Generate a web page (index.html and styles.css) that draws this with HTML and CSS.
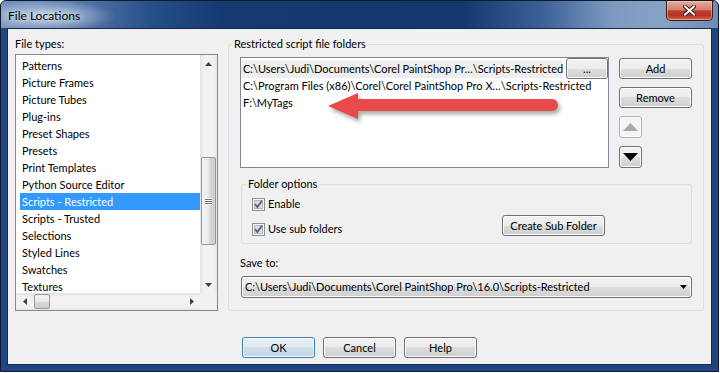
FILE: index.html
```html
<!DOCTYPE html>
<html lang="en">

<head>
    <meta charset="UTF-8">
    <meta name="viewport" content="width=device-width, initial-scale=1.0">
    <title>File Locations</title>
    <link rel="stylesheet" href="styles.css">
</head>

<body>
    <div class="window">
        <div class="titlebar">
            <span class="title">File Locations</span>
            <button class="close">
                <svg width="13" height="11" viewBox="0 0 13 11">
                    <path d="M2 1.5 L11 9.5 M11 1.5 L2 9.5" stroke="#3a1a16" stroke-width="4" stroke-linecap="square" />
                    <path d="M2 1.5 L11 9.5 M11 1.5 L2 9.5" stroke="#fff" stroke-width="2" stroke-linecap="square" />
                </svg>
            </button>
        </div>
        <div class="frame">
            <div class="client">
                <div class="main">
                    <div class="types">
                        <div class="caption">File types:</div>
                        <div class="listbox">
                            <ul class="items">
                                <li>Patterns</li>
                                <li>Picture Frames</li>
                                <li>Picture Tubes</li>
                                <li>Plug-ins</li>
                                <li>Preset Shapes</li>
                                <li>Presets</li>
                                <li>Print Templates</li>
                                <li>Python Source Editor</li>
                                <li class="selected">Scripts - Restricted</li>
                                <li>Scripts - Trusted</li>
                                <li>Selections</li>
                                <li>Styled Lines</li>
                                <li>Swatches</li>
                                <li>Textures</li>
                            </ul>
                            <div class="vscroll">
                                <span class="sb-btn"><svg width="7" height="4"><polygon points="0,4 3.5,0 7,4" fill="#404040" /></svg></span>
                                <span class="track"><span class="thumb"><i class="grip"></i></span></span>
                                <span class="sb-btn"><svg width="7" height="4"><polygon points="0,0 7,0 3.5,4" fill="#404040" /></svg></span>
                            </div>
                            <div class="hscroll">
                                <span class="sb-btn"><svg width="4" height="7"><polygon points="4,0 4,7 0,3.5" fill="#404040" /></svg></span>
                                <span class="track"><span class="thumb"></span></span>
                                <span class="sb-btn"><svg width="4" height="7"><polygon points="0,0 0,7 4,3.5" fill="#404040" /></svg></span>
                            </div>
                            <div class="corner"></div>
                        </div>
                    </div>

                    <fieldset class="group restricted">
                        <legend>Restricted script file folders</legend>
                        <div class="folders-row">
                            <div class="folders">
                                <div class="folder editing">
                                    <span class="path">C:\Users\Judi\Documents\Corel PaintShop Pr…\Scripts-Restricted</span>
                                    <button class="btn browse">...</button>
                                </div>
                                <div class="folder">C:\Program Files (x86)\Corel\Corel PaintShop Pro X…\Scripts-Restricted</div>
                                <div class="folder">F:\MyTags</div>
                            </div>
                            <div class="side-buttons">
                                <button class="btn">Add</button>
                                <button class="btn">Remove</button>
                                <button class="btn arrow-btn" disabled>
                                    <svg width="15" height="8"><polygon points="0,8 7.5,0 15,8" fill="#a8a8a8" /></svg>
                                </button>
                                <button class="btn arrow-btn">
                                    <svg width="15" height="8"><polygon points="0,0 15,0 7.5,8" fill="#000" /></svg>
                                </button>
                            </div>
                        </div>

                        <fieldset class="group options">
                            <legend>Folder options</legend>
                            <label class="check">
                                <svg width="13" height="13" viewBox="0 0 13 13">
                                    <rect x="0.5" y="0.5" width="12" height="12" fill="#f6f6f6" stroke="#8e8f8f" />
                                    <rect x="2.5" y="2.5" width="8" height="8" fill="#dedede" stroke="#b4b8bc" />
                                    <path d="M3 6.2 L5.4 9 L10 2.8" fill="none" stroke="#4c5f8f" stroke-width="1.8" />
                                </svg>
                                Enable
                            </label>
                            <div class="options-row">
                                <label class="check">
                                    <svg width="13" height="13" viewBox="0 0 13 13">
                                        <rect x="0.5" y="0.5" width="12" height="12" fill="#f6f6f6" stroke="#8e8f8f" />
                                        <rect x="2.5" y="2.5" width="8" height="8" fill="#dedede" stroke="#b4b8bc" />
                                        <path d="M3 6.2 L5.4 9 L10 2.8" fill="none" stroke="#4c5f8f" stroke-width="1.8" />
                                    </svg>
                                    Use sub folders
                                </label>
                                <button class="btn create">Create Sub Folder</button>
                            </div>
                        </fieldset>

                        <div class="caption save">Save to:</div>
                        <div class="combo">
                            <span>C:\Users\Judi\Documents\Corel PaintShop Pro\16.0\Scripts-Restricted</span>
                            <svg width="7" height="4"><polygon points="0,0 7,0 3.5,4" fill="#000" /></svg>
                        </div>
                    </fieldset>
                </div>

                <div class="footer">
                    <button class="btn default">OK</button>
                    <button class="btn">Cancel</button>
                    <button class="btn">Help</button>
                </div>
            </div>
        </div>

        <!-- red callout arrow pasted over the dialog -->
        <svg class="callout" width="250" height="44" viewBox="0 0 250 44">
            <path d="M7 20 L37 7 L37 13 L231 13 A6 6 0 0 1 231 25 L37 25 L37 33 Z" fill="#e84a4a" />
        </svg>
    </div>
</body>

</html>
```

FILE: styles.css
```css
* {
    box-sizing: border-box;
}

body {
    margin: 0;
    background: #fff;
    font-family: Lato, "Liberation Sans", sans-serif;
    font-size: 11px;
    line-height: 16px;
    color: #000;
}

button {
    font: inherit;
    color: #000;
    padding: 0;
}

.window {
    position: relative;
    width: 719px;
    height: 372px;
    border: 1px solid #0d1a2c;
    border-radius: 6px 6px 0 0;
    background: #1f4682;
    display: flex;
    flex-direction: column;
}

.titlebar {
    height: 27px;
    display: flex;
    justify-content: space-between;
    align-items: flex-start;
    border-radius: 5px 5px 0 0;
    background:
        radial-gradient(ellipse 70px 16px at 45px 15px, rgba(230, 238, 248, 0.75), rgba(230, 238, 248, 0) 100%),
        linear-gradient(to right, #7592bb 0, #5a7dad 70px, #274f88 150px, #143a70 220px, #12386e 460px, #3b6096 540px, #7c99c0 610px, #86a2c6 660px, #6d8bb5 718px);
}

.title {
    padding: 7px 0 0 7px;
    font-size: 12px;
    text-shadow: 0 0 6px rgba(255, 255, 255, 0.9);
}

.close {
    width: 47px;
    height: 20px;
    margin-right: 5px;
    border: 1px solid #3e1e1c;
    border-top: 0;
    border-radius: 0 0 5px 5px;
    background: linear-gradient(#e6ab9c 0, #d8806f 45%, #c0402f 52%, #b5311f 75%, #d66a4c 100%);
    box-shadow: inset 0 0 0 1px rgba(255, 210, 200, 0.45);
    display: flex;
    align-items: center;
    justify-content: center;
}

.frame {
    flex: 1;
    padding: 0 6px 6px 6px;
}

.client {
    height: 100%;
    border: 1px solid #14294a;
    background: #f0f0f0;
    padding: 7px 7px 6px 7px;
    display: flex;
    flex-direction: column;
}

.main {
    display: flex;
    gap: 10px;
    align-items: flex-start;
}

.types {
    width: 203px;
}

.caption {
    height: 16px;
    margin-bottom: 2px;
}

/* file types list with scrollbars */
.listbox {
    height: 257px;
    border: 1px solid #828790;
    background: #fff;
    display: grid;
    grid-template-columns: 1fr 17px;
    grid-template-rows: 1fr 17px;
}

.items {
    list-style: none;
    margin: 0;
    padding: 2px 0 0 4px;
    overflow: hidden;
}

.items li {
    height: 17px;
    line-height: 17px;
    padding-left: 2px;
    white-space: nowrap;
}

.items li.selected {
    background: #3399ff;
    color: #fff;
}

.vscroll,
.hscroll {
    display: flex;
    background: linear-gradient(to right, #e3e3e3, #f2f2f2 25%, #f2f2f2 75%, #e9e9e9);
}

.vscroll {
    flex-direction: column;
}

.hscroll {
    background: linear-gradient(#e3e3e3, #f2f2f2 25%, #f2f2f2 75%, #e9e9e9);
}

.sb-btn {
    flex: none;
    width: 17px;
    height: 17px;
    display: flex;
    align-items: center;
    justify-content: center;
}

.track {
    flex: 1;
    display: flex;
}

.vscroll .track {
    flex-direction: column;
}

.thumb {
    border: 1px solid #979797;
    border-radius: 2px;
    display: flex;
    align-items: center;
    justify-content: center;
}

.vscroll .thumb {
    width: 15px;
    height: 88px;
    margin: 85px 0 0 1px;
    background: linear-gradient(to right, #f4f4f4, #e9e9e9 50%, #d9d9d9 51%, #cdcdcd);
}

.hscroll .thumb {
    width: 16px;
    height: 15px;
    margin: 1px 0 0 1px;
    background: linear-gradient(#f4f4f4, #e9e9e9 50%, #d9d9d9 51%, #cdcdcd);
}

.grip {
    width: 7px;
    height: 7px;
    background: repeating-linear-gradient(#fafafa 0, #fafafa 1px, #6f6f6f 1px, #6f6f6f 2px);
}

.corner {
    background: #f0f0f0;
}

/* group boxes */
.group {
    margin: 0;
    min-width: 0;
    border: 1px solid #d5dfe5;
    border-radius: 3px;
}

.group legend {
    padding: 0 2px;
    line-height: 16px;
}

.restricted {
    width: 476px;
    padding: 5px 11px 12px 11px;
}

.restricted > legend {
    margin-left: -8px;
}

.folders-row {
    display: flex;
    gap: 10px;
    align-items: flex-start;
}

.folders {
    width: 369px;
    height: 111px;
    border: 1px solid #828790;
    background: #fff;
    padding-top: 2px;
}

.folder {
    height: 17px;
    line-height: 17px;
    padding-left: 2px;
    white-space: nowrap;
}

.folder.editing {
    display: flex;
    align-items: center;
    padding-left: 0;
}

.folder.editing .path {
    width: 321px;
    height: 18px;
    line-height: 18px;
    padding-left: 2px;
    background: #eeeeee;
}

.browse {
    width: 23px;
    height: 17px;
    margin-left: 4px;
    line-height: 12px;
}

.side-buttons {
    width: 73px;
    margin-top: 1px;
    display: flex;
    flex-direction: column;
    align-items: flex-start;
    gap: 8px;
}

.btn {
    width: 73px;
    height: 21px;
    border: 1px solid #707070;
    border-radius: 3px;
    background: linear-gradient(#f2f2f2 0, #ebebeb 50%, #dddddd 50%, #cfcfcf 100%);
    box-shadow: inset 0 0 0 1px #fcfcfc;
}

.btn.default {
    border-color: #3c7fb1;
    background: linear-gradient(#e8f0f7 0, #dfe9f2 50%, #cfdde9 50%, #c4d5e4 100%);
}

.arrow-btn {
    width: 23px;
    height: 22px;
    display: flex;
    align-items: center;
    justify-content: center;
}

.arrow-btn:disabled {
    border-color: #adb2b5;
    background: #f4f4f4;
}

.options {
    margin: 8px 0 0 1px;
    padding: 4px 10px 7px 10px;
}

.options > legend {
    margin-left: -6px;
}

.check {
    height: 16px;
    display: flex;
    align-items: center;
    gap: 3px;
}

.options-row {
    margin-top: 3px;
    display: grid;
    grid-template-columns: 250px auto;
    align-items: end;
}

.options-row .check {
    margin-bottom: -1px;
}

.btn.create {
    width: 103px;
}

.caption.save {
    margin: 11px 0 0 0;
}

.combo {
    margin: 5px 0 0 1px;
    height: 22px;
    padding: 0 4px 0 3px;
    display: flex;
    align-items: center;
    justify-content: space-between;
    border: 1px solid #707070;
    border-radius: 3px;
    background: linear-gradient(#f2f2f2 0, #ebebeb 50%, #dddddd 50%, #cfcfcf 100%);
    box-shadow: inset 0 0 0 1px #fcfcfc;
}

.footer {
    margin-top: 26px;
    display: flex;
    justify-content: center;
    gap: 8px;
}

.callout {
    position: absolute;
    left: 320px;
    top: 85px;
    filter: drop-shadow(2px 3px 2px rgba(0, 0, 0, 0.35));
}
```
